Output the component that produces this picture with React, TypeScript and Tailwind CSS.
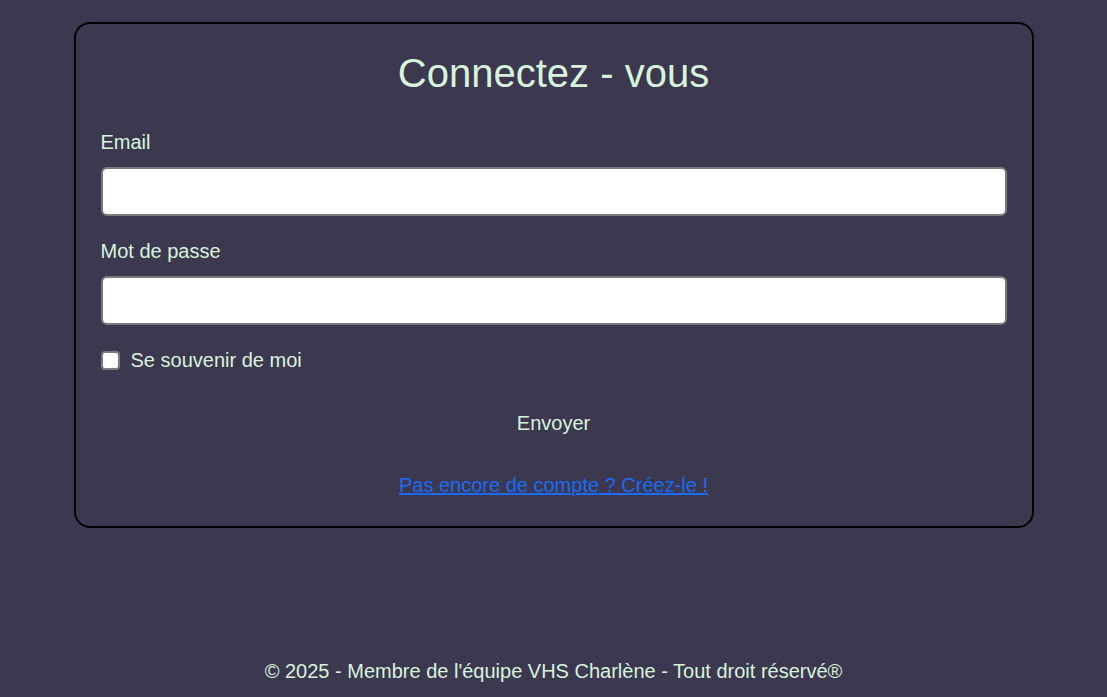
import React, { useState } from 'react';

export default function App() {
  const [email, setEmail] = useState('');
  const [password, setPassword] = useState('');
  const [remember, setRemember] = useState(false);

  return (
    <div className="min-h-[697px] bg-[#3c384f] text-[#d8f3dc] flex flex-col font-['Liberation_Sans',Arial,sans-serif]">
      {/* Login card */}
      <main className="w-[960px] mx-auto mt-[22px] border-2 border-black rounded-2xl px-[25px] pt-[25px] pb-[26px]">
        <h1 className="text-[40px] leading-[48px] text-center">Connectez - vous</h1>
        <form onSubmit={(e) => e.preventDefault()} className="mt-[29px] flex flex-col">
          <label htmlFor="email" className="pt-[1px] text-[20px] leading-[30px]">Email</label>
          <input
            id="email"
            type="email"
            value={email}
            onChange={(e) => setEmail(e.target.value)}
            className="mt-[10px] h-[49px] w-full bg-white text-black rounded-md border-2 border-[#7a7a7a] px-3 text-[20px] outline-none"
          />
          <label htmlFor="password" className="mt-[19px] pt-[1px] text-[20px] leading-[30px]">Mot de passe</label>
          <input
            id="password"
            type="password"
            value={password}
            onChange={(e) => setPassword(e.target.value)}
            className="mt-[10px] h-[49px] w-full bg-white text-black rounded-md border-2 border-[#7a7a7a] px-3 text-[20px] outline-none"
          />
          <label className="mt-[20px] flex items-center gap-[11px] text-[20px] leading-[30px]">
            <input
              type="checkbox"
              checked={remember}
              onChange={(e) => setRemember(e.target.checked)}
              className="appearance-none w-[19px] h-[19px] bg-white rounded-[4px] border-2 border-[#7a7a7a]"
            />
            Se souvenir de moi
          </label>
          <button type="submit" className="mt-[33px] self-center text-[20px] leading-[30px]">Envoyer</button>
          <a href="#" className="mt-[32px] self-center text-[20px] leading-[30px] text-[#1a6cf5] underline">
            Pas encore de compte ? Créez-le !
          </a>
        </form>
      </main>

      <footer className="mt-auto pb-[11px] text-center text-[20px] leading-[30px]">
        © 2025 - Membre de l'équipe VHS Charlène - Tout droit réservé®
      </footer>
    </div>
  );
}
